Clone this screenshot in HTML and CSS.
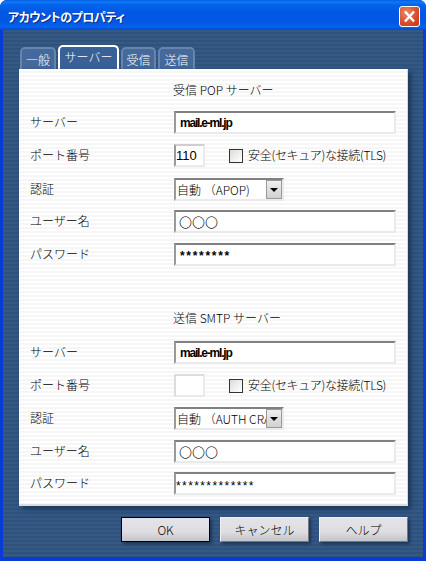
FILE: index.html
```html
<!DOCTYPE html>
<html lang="ja">
<head>
<meta charset="utf-8">
<title>アカウントのプロパティ</title>
<link rel="stylesheet" href="styles.css">
</head>
<body>
<div class="window">
  <header class="titlebar">
    <span class="title">アカウントのプロパティ</span>
    <button class="close" aria-label="閉じる">
      <svg width="19" height="19" viewBox="0 0 19 19"><path d="M5 4.5 L14 14.5 M14 4.5 L5 14.5" stroke="#fff" stroke-width="2.4" fill="none"/></svg>
    </button>
  </header>
  <main class="client">
    <nav class="tabs">
      <span class="tab tab-a">一般</span>
      <span class="tab tab-active">サーバー</span>
      <span class="tab tab-b">受信</span>
      <span class="tab tab-c">送信</span>
    </nav>
    <section class="panel">
      <h2 class="heading">受信 POP サーバー</h2>
      <div class="row r33"><label class="label">サーバー</label><div class="field wide bold">mail.e-ml.jp</div></div>
      <div class="row r34"><label class="label">ポート番号</label><div class="field port">110</div><span class="check"></span><span class="check-label">安全(セキュア)な接続(TLS)</span></div>
      <div class="row r32"><label class="label">認証</label><div class="combo"><span class="combo-text">自動 （APOP)</span><span class="combo-btn"><i class="arrow"></i></span></div></div>
      <div class="row r33"><label class="label">ユーザー名</label><div class="field wide circles">〇〇〇</div></div>
      <div class="row r33"><label class="label">パスワード</label><div class="field wide stars">********</div></div>
      <h2 class="heading heading-2">送信 SMTP サーバー</h2>
      <div class="row r33"><label class="label">サーバー</label><div class="field wide bold">mail.e-ml.jp</div></div>
      <div class="row r33"><label class="label">ポート番号</label><div class="field port port-empty"></div><span class="check"></span><span class="check-label">安全(セキュア)な接続(TLS)</span></div>
      <div class="row r33"><label class="label">認証</label><div class="combo"><span class="combo-text">自動 （AUTH CRAM-MD5)</span><span class="combo-btn"><i class="arrow"></i></span></div></div>
      <div class="row r32"><label class="label">ユーザー名</label><div class="field wide circles">〇〇〇</div></div>
      <div class="row r33"><label class="label">パスワード</label><div class="field wide stars2">*************</div></div>
    </section>
    <footer class="actions">
      <button class="btn btn-default">OK</button>
      <button class="btn">キャンセル</button>
      <button class="btn">ヘルプ</button>
    </footer>
  </main>
</div>
</body>
</html>
```
FILE: styles.css
```css
* { box-sizing: border-box; }
html, body { margin: 0; padding: 0; }
body { width: 426px; height: 561px; overflow: hidden; font-family: "Noto Sans CJK JP", "Liberation Sans", sans-serif; font-size: 12px; font-weight: 300; color: #000; }
.window { width: 426px; height: 561px; display: flex; flex-direction: column; background: #0a3ad8; border-radius: 7px 7px 0 0; overflow: hidden; }
.titlebar { flex: 0 0 30px; display: flex; align-items: center; justify-content: space-between; padding: 3px 6px 0 8px;
  background: linear-gradient(#0a5ae6 0, #0a7cf8 2px, #0362ea 5px, #0258e4 12px, #0256e2 22px, #0463ee 27px, #0348cf 30px); }
.title { color: #fff; font-weight: 700; font-size: 12px; font-feature-settings: "palt"; letter-spacing: -0.5px; line-height: 1; text-shadow: 1px 1px 0 #0a2c8c; }
.close { width: 21px; height: 21px; padding: 0; border: 1px solid #fff; border-radius: 3px; background: radial-gradient(circle at 35% 30%, #ea8a66, #d9492a 60%, #c23a18); display: flex; }
.client { flex: 1; margin: 0 3px 4px 3px; display: flex; flex-direction: column; padding: 15px 15px 0 16px;
  background: repeating-linear-gradient(#345985 0 2px, #2f527d 2px 4px); }
.tabs { display: flex; align-items: flex-end; height: 24px; padding-left: 1px; gap: 2px; }
.tab { height: 22px; display: flex; align-items: center; justify-content: center; color: #fff; background: #44699a; border: 2px solid #6585ad; border-bottom: 0; border-radius: 5px 5px 0 0; font-size: 12px; }
.tab-a { width: 36px; }
.tab-active { width: 61px; height: 24px; border-color: #fff; background: #3a6098; padding-bottom: 3px; }
.tab-b { width: 35px; }
.tab-c { width: 37px; }
.panel { width: 389px; height: 437px; padding: 0 11px; box-shadow: 3px 3px 5px #1c3558;
  background: repeating-linear-gradient(#ffffff 0 2px, #f6f6f6 2px 4px); border-right: 1px solid #d8d8d8; border-bottom: 2px solid #dcdcdc; }
.heading { margin: 0; height: 42px; padding: 13px 0 0 143px; font-weight: 300; font-size: 12px; line-height: 16px; }
.heading-2 { height: 65px; padding-top: 34px; }
.row { display: flex; align-items: flex-start; }
.r32 { height: 32px; } .r33 { height: 33px; } .r34 { height: 34px; }
.label { width: 144px; line-height: 22px; }
.field { height: 23px; background: #fff; border: 2px solid #eaeaea; border-top-color: #808080; border-left-color: #9a9a9a; padding: 0 3px; line-height: 20px; white-space: nowrap; overflow: hidden; }
.wide { width: 222px; }
.port { width: 31px; padding: 0; border-top-color: #cfcfcf; font-family: "Liberation Sans", sans-serif; font-weight: 400; font-size: 13px; }
.port-empty { border-left-color: #dcdcdc; border-top-color: #dcdcdc; }
.bold { font-family: "Liberation Sans", sans-serif; font-weight: 700; font-size: 12px; letter-spacing: -1.2px; padding-left: 4px; }
.circles { font-size: 13px; padding-left: 3px; }
.stars { font-family: "Liberation Sans", sans-serif; font-weight: 700; font-size: 12px; letter-spacing: 1.7px; padding-left: 4px; line-height: 23px; }
.stars2 { font-family: "Liberation Sans", sans-serif; font-weight: 400; font-size: 12px; letter-spacing: 1.4px; padding-left: 0; line-height: 24px; }
.check { width: 14px; height: 14px; margin: 5px 0 0 24px; border: 1px solid #333; background: linear-gradient(135deg, #dcdcd6, #fff); }
.check-label { margin-left: 5px; line-height: 22px; font-size: 12px; letter-spacing: -0.3px; white-space: nowrap; }
.combo { width: 110px; height: 23px; display: flex; background: #fff; border: 2px solid #eaeaea; border-top-color: #808080; border-left-color: #9a9a9a; }
.combo-text { flex: 1; min-width: 0; overflow: hidden; white-space: nowrap; line-height: 20px; padding-left: 1px; }
.combo-btn { flex: 0 0 16px; display: flex; align-items: center; justify-content: center; background: linear-gradient(#efefef, #d0d0d0); border: 1px solid #9a9a9a; }
.arrow { width: 0; height: 0; border: 4px solid transparent; border-top: 4px solid #000; border-bottom: 0; }
.actions { display: flex; gap: 10px; margin-top: 11px; padding-left: 102px; }
.btn { flex: none; width: 89px; height: 25px; padding: 0; font: inherit; color: #000; background: linear-gradient(#e4e4e8 0, #dedee2 60%, #c4c4c8 100%); border: 1px solid #f0f0f0; border-right-color: #777; border-bottom-color: #777; box-shadow: 2px 2px 3px #1c3558; }
.btn-default { border: 1px solid #000; }
```
